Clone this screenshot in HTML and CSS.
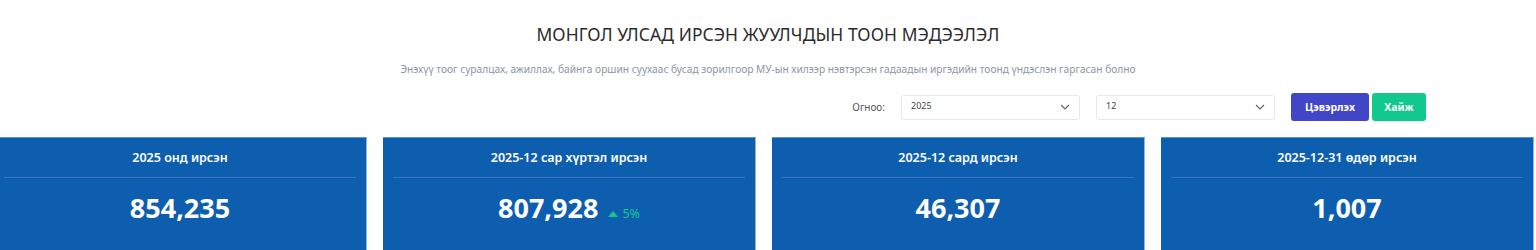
FILE: index.html
```html
<!DOCTYPE html>
<html lang="mn">

<head>
    <meta charset="UTF-8">
    <meta name="viewport" content="width=device-width, initial-scale=1.0">
    <title>Жуулчдын тоон мэдээлэл</title>
    <link rel="stylesheet" href="styles.css">
</head>

<body>
    <div class="page">
        <h1 class="title">МОНГОЛ УЛСАД ИРСЭН ЖУУЛЧДЫН ТООН МЭДЭЭЛЭЛ</h1>
        <p class="subtitle">Энэхүү тоог суралцах, ажиллах, байнга оршин суухаас бусад зорилгоор МУ-ын хилээр нэвтэрсэн гадаадын иргэдийн тоонд үндэслэн гаргасан болно</p>

        <div class="filter">
            <span class="filter-label">Огноо:</span>
            <div class="select">
                <span>2025</span>
                <svg width="10" height="6" viewBox="0 0 10 6"><path d="M1 1l4 4 4-4" fill="none" stroke="#666" stroke-width="1.2"/></svg>
            </div>
            <div class="select">
                <span>12</span>
                <svg width="10" height="6" viewBox="0 0 10 6"><path d="M1 1l4 4 4-4" fill="none" stroke="#666" stroke-width="1.2"/></svg>
            </div>
            <button class="btn btn-clear">Цэвэрлэх</button>
            <button class="btn btn-search">Хайж</button>
        </div>

        <div class="cards">
            <div class="card">
                <div class="card-head">2025 онд ирсэн</div>
                <div class="card-num">854,235</div>
            </div>
            <div class="card">
                <div class="card-head">2025-12 сар хүртэл ирсэн</div>
                <div class="card-num">807,928 <span class="up"><i class="tri"></i>5%</span></div>
            </div>
            <div class="card">
                <div class="card-head">2025-12 сард ирсэн</div>
                <div class="card-num">46,307</div>
            </div>
            <div class="card">
                <div class="card-head">2025-12-31 өдөр ирсэн</div>
                <div class="card-num">1,007</div>
            </div>
        </div>
    </div>
</body>

</html>
```

FILE: styles.css
```css
* {
    margin: 0;
    padding: 0;
    box-sizing: border-box;
}

body {
    font-family: "Noto Sans", "Open Sans", sans-serif;
    background: #fff;
    overflow: hidden;
}

.page {
    width: 1536px;
}

.title {
    text-align: center;
    font-size: 17.4px;
    font-weight: 400;
    color: #2b2b2b;
    padding-top: 23px;
    line-height: 22px;
    letter-spacing: 0.1px;
}

.subtitle {
    text-align: center;
    font-size: 10.2px;
    color: #8c95a3;
    margin-top: 17px;
    line-height: 14px;
}

.filter {
    display: flex;
    justify-content: flex-end;
    align-items: center;
    padding-right: 110px;
    margin-top: 17px;
    height: 28px;
}

.filter-label {
    font-size: 10px;
    color: #555;
    margin-right: 16px;
}

.select {
    width: 179px;
    height: 25px;
    border: 1px solid #e6e8ec;
    border-radius: 3px;
    display: flex;
    align-items: center;
    justify-content: space-between;
    padding: 0 9px 0 9px;
    font-size: 9px;
    color: #444;
    margin-right: 16px;
}

.select span {
    position: relative;
    top: -2px;
}

.btn {
    border: none;
    border-radius: 3px;
    height: 28px;
    color: #fff;
    font-family: "Noto Sans", sans-serif;
    font-size: 10.5px;
    font-weight: 700;
}

.btn-clear {
    width: 78px;
    background: #4145c8;
    margin-right: 3px;
}

.btn-search {
    width: 54px;
    background: #11c98d;
}

.cards {
    display: grid;
    grid-template-columns: repeat(4, 373px);
    column-gap: 16px;
    margin-left: -6px;
    margin-top: 16px;
}

.card {
    background: #0d5eaf;
    border-top: 1px solid #5c93cf;
    border-right: 1px solid #8fb5e0;
    height: 120px;
    padding: 0 10px;
    color: #fff;
    text-align: center;
}

.card-head {
    font-size: 12.5px;
    font-weight: 600;
    padding-top: 11px;
    height: 40px;
    border-bottom: 1px solid #3576bd;
}

.card-num {
    font-size: 27px;
    font-weight: 700;
    padding-top: 12px;
    line-height: 36px;
}

.up {
    font-size: 12.5px;
    font-weight: 400;
    color: #13c98a;
    margin-left: 3px;
}

.tri {
    display: inline-block;
    width: 0;
    height: 0;
    border-left: 5px solid transparent;
    border-right: 5px solid transparent;
    border-bottom: 6px solid #13c98a;
    margin-right: 4px;
    vertical-align: 1px;
}
```
